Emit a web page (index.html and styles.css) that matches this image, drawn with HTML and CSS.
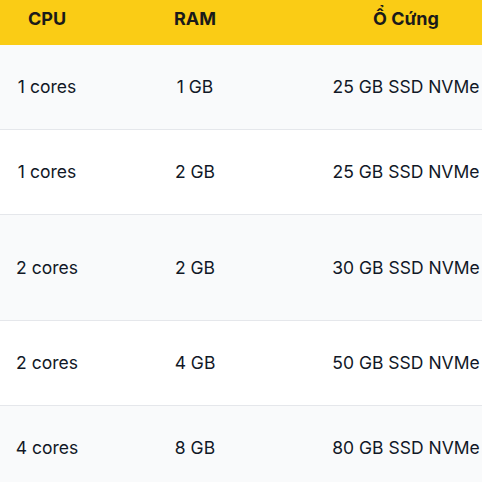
FILE: index.html
```html
<!DOCTYPE html>
<html lang="vi">
<head>
	<meta charset="UTF-8">
	<meta name="viewport" content="width=device-width, initial-scale=1.0">
	<title>Bảng cấu hình</title>
	<link rel="stylesheet" href="styles.css">
</head>
<body>
	<div class="table-wrap">
		<table class="plan-table">
			<colgroup>
				<col class="col-cpu">
				<col class="col-ram">
				<col class="col-disk">
			</colgroup>
			<thead>
				<tr>
					<th>CPU</th>
					<th>RAM</th>
					<th>Ổ Cứng</th>
				</tr>
			</thead>
			<tbody>
				<tr class="row-alt">
					<td>1 cores</td>
					<td>1 GB</td>
					<td>25 GB SSD NVMe</td>
				</tr>
				<tr>
					<td>1 cores</td>
					<td>2 GB</td>
					<td>25 GB SSD NVMe</td>
				</tr>
				<tr class="row-alt row-tall">
					<td>2 cores</td>
					<td>2 GB</td>
					<td>30 GB SSD NVMe</td>
				</tr>
				<tr>
					<td>2 cores</td>
					<td>4 GB</td>
					<td>50 GB SSD NVMe</td>
				</tr>
				<tr class="row-alt">
					<td>4 cores</td>
					<td>8 GB</td>
					<td>80 GB SSD NVMe</td>
				</tr>
			</tbody>
		</table>
	</div>
</body>
</html>
```

FILE: styles.css
```css
body{
	margin: 0; background: #fff; overflow: hidden;
	font-family: Inter, "Noto Sans", sans-serif; font-size: 17.5px; color: #111827;
}
.table-wrap{width: 482px; overflow: hidden;}
.plan-table{
	width: 516px; table-layout: fixed; border-collapse: collapse;
}
.col-cpu{width: 94px;}
.col-ram{width: 202px;}
.col-disk{width: 220px;}
.plan-table th{
	background: #facc15; color: #1a1a1a; font-weight: 700; font-size: 18px;
	height: 45px; padding: 0 0 7px; line-height: 24px; text-align: center; box-sizing: border-box;
}
.plan-table td{
	height: 84px; padding: 0; line-height: 24px; text-align: center; white-space: nowrap;
}
.plan-table tbody tr{border-bottom: 1px solid #e5e7eb;}
.plan-table tr.row-alt{background: #f9fafb;}
.plan-table tr.row-tall td{height: 105px;}
```
